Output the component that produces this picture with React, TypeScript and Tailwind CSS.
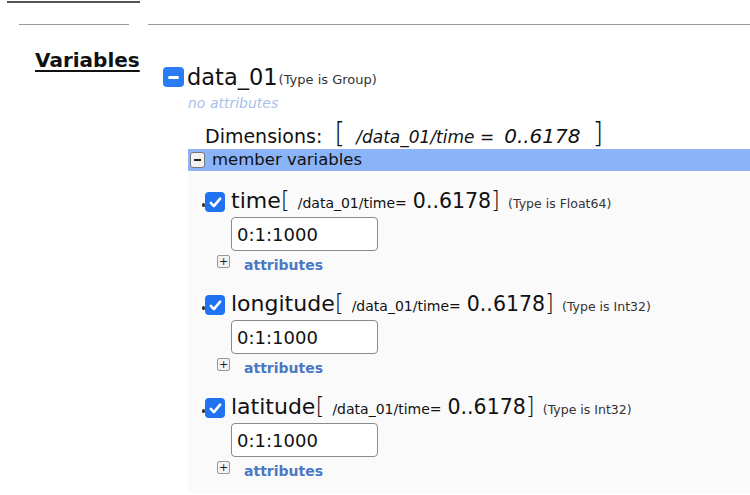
import React from 'react';

const rows = [
    { name: 'time', type: 'Float64' },
    { name: 'longitude', type: 'Int32' },
    { name: 'latitude', type: 'Int32' },
];

const CheckBox = () => (
    <div className="flex items-center">
        <span className="w-[3px] h-[4px] mt-[6px] rounded-full bg-[#333]" />
        <span className="w-[20px] h-[20px] rounded-[4px] bg-[#1f72f0] flex items-center justify-center">
            <svg viewBox="0 0 20 20" className="w-[17px] h-[17px]">
                <path d="M4.5 10.5l3.6 3.8L15.5 5.5" stroke="white" strokeWidth="3" fill="none" strokeLinecap="round" strokeLinejoin="round" />
            </svg>
        </span>
    </div>
);

const MemberRow = ({ name, type }: { name: string; type: string }) => (
    <div className="pl-[14px] mb-[27px] last:mb-0">
        <div className="flex items-center h-[20px]">
            <CheckBox />
            <div className="flex items-baseline ml-[6px] leading-none text-[#111] mt-[-4px]">
                <span className="text-[22px]">{name}</span>
                <span className="text-[23px] font-light">[</span>
                <span className="text-[14px] ml-[8px]">/data_01/time=</span>
                <span className="text-[20.5px] ml-[6px]">0..6178</span>
                <span className="text-[23px] font-light">]</span>
                <span className="text-[12.5px] ml-[8px] text-[#333]">(Type is {type})</span>
            </div>
        </div>
        <input
            readOnly
            value="0:1:1000"
            className="block mt-[5px] ml-[29px] w-[147px] h-[34px] border border-[#8a8a8a] rounded-[4px] px-[5px] text-[18px] text-[#111] bg-white outline-none"
        />
        <div className="flex items-center mt-[4px] ml-[15px] h-[13px]">
            <span className="w-[13px] h-[13px] border border-[#999] rounded-[2px] bg-[#f3f3f3] flex items-center justify-center text-[11px] leading-none text-[#222]">+</span>
            <span className="ml-[14px] text-[14px] font-bold text-[#4a78c4] leading-none mt-[6px]">attributes</span>
        </div>
    </div>
);

export default function App() {
    return (
        <div className="w-[750px] min-h-[495px] bg-white font-['DejaVu_Sans',sans-serif] overflow-hidden">
            <div className="h-[2px] w-[133px] ml-[7px] mt-[1px] bg-[#555]" />
            <div className="flex mt-[21px]">
                <div className="ml-[19px] w-[110px] h-px bg-[#999]" />
                <div className="ml-[19px] flex-1 h-px bg-[#999]" />
            </div>

            <div className="flex">
                <div className="w-[163px] shrink-0 pl-[35px] pt-[23px]">
                    <span className="text-[20px] font-bold underline underline-offset-[3px] decoration-[1.5px] leading-[24px] text-[#111]">Variables</span>
                </div>

                <div className="flex-1">
                    <div className="flex items-center h-[26px] mt-[39px]">
                        <span className="w-[21px] h-[20px] rounded-[4px] bg-[#2a7cf6] flex items-center justify-center">
                            <span className="w-[11px] h-[3px] rounded-full bg-white" />
                        </span>
                        <span className="ml-[3px] text-[22.5px] leading-none text-[#111]">data_01</span>
                        <span className="ml-[1px] mt-[4px] text-[13px] leading-none text-[#333]">(Type is Group)</span>
                    </div>
                    <div className="pl-[25px] mt-[4px] text-[14px] italic leading-[18px] text-[#a9c1ea]">no attributes</div>

                    <div className="flex items-baseline pl-[42px] mt-[8px] h-[29px] text-[#111] leading-none">
                        <span className="text-[19px]">Dimensions:</span>
                        <span className="text-[28px] font-light ml-[12px]">[</span>
                        <span className="text-[17px] italic ml-[11px]">/data_01/time =</span>
                        <span className="text-[20px] italic ml-[10px]">0..6178</span>
                        <span className="text-[28px] font-light ml-[12px]">]</span>
                    </div>

                    <div className="ml-[25px] bg-[#fafafa] pb-[20px]">
                        <div className="flex items-center h-[22px] bg-[#8ab4f7] pl-[2px]">
                            <span className="w-[15px] h-[16px] border border-[#777] rounded-[3px] bg-[#f2f2f2] flex items-center justify-center">
                                <span className="w-[7px] h-[1.5px] bg-[#222]" />
                            </span>
                            <span className="ml-[7px] text-[16.5px] leading-none text-[#111]">member variables</span>
                        </div>
                        <div className="pt-[21px]">
                            {rows.map((r) => (
                                <MemberRow key={r.name} name={r.name} type={r.type} />
                            ))}
                        </div>
                    </div>
                </div>
            </div>
        </div>
    );
}
